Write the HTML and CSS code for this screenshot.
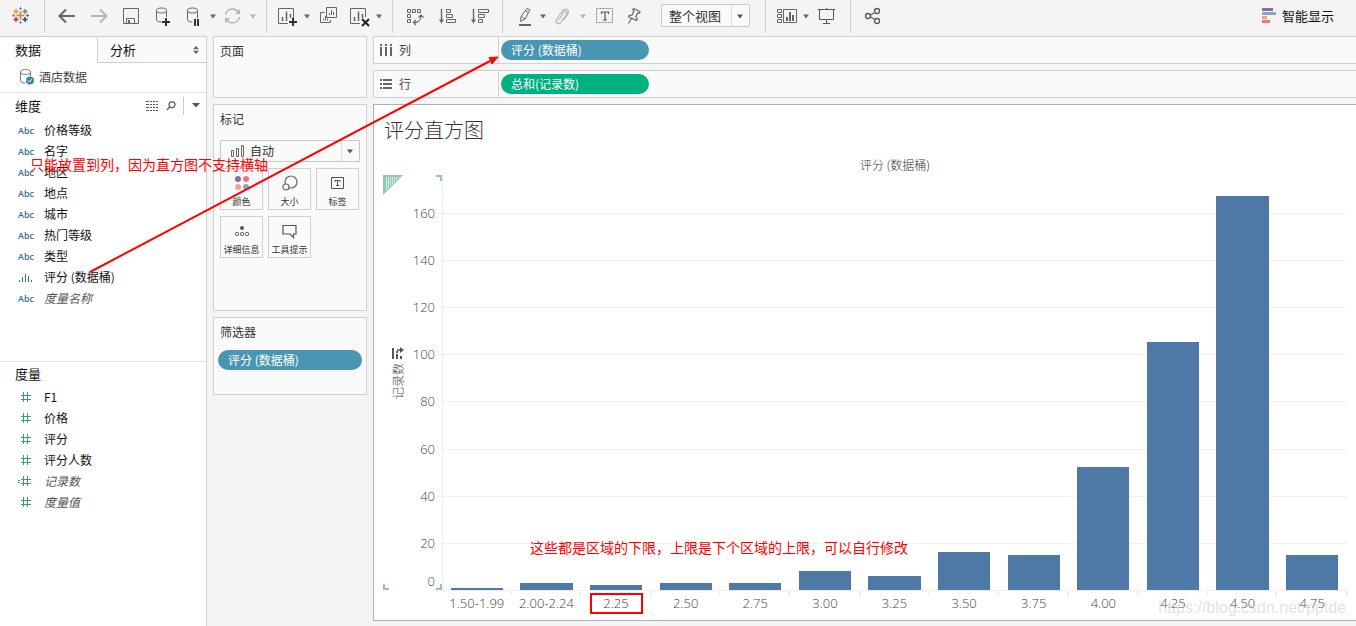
FILE: index.html
```html
<!DOCTYPE html>
<html lang="zh-CN">
<head>
<meta charset="utf-8">
<title>评分直方图</title>
<link rel="stylesheet" href="styles.css">
</head>
<body>
<svg class="defs" aria-hidden="true">
  <symbol id="caret" viewBox="0 0 12 28"><path d="M3 12.500h6l-3 4z" fill="currentColor"/></symbol>
  <symbol id="hash" viewBox="0 0 16 14"><path d="M5.500 2v10M9.500 2v10M3 5.500h10M3 9.500h10" fill="none" stroke="#3a9c7c"/></symbol>
</svg>

<header class="toolbar">
  <div class="group group-logo">
    <svg class="ico" viewBox="0 0 28 28" fill="none" stroke-width="1.400">
      <path d="M14.500 9.500v8M10.500 13.500h8" stroke="#e8762c" stroke-width="1.600"/>
      <path d="M10 7v5M7.500 9.500h5" stroke="#eb912c"/><path d="M19 7v5M16.500 9.500h5" stroke="#59879b"/>
      <path d="M10 15v5M7.500 17.500h5" stroke="#c72037"/><path d="M19 15v5M16.500 17.500h5" stroke="#1f457e"/>
      <path d="M14.500 5v3M13 6.500h3" stroke="#7199a6" stroke-width="1"/><path d="M14.500 19v3M13 20.500h3" stroke="#7099c9" stroke-width="1"/>
      <path d="M7.500 12v3M6 13.500h3" stroke="#e8762c" stroke-width="1"/><path d="M21.500 12v3M20 13.500h3" stroke="#5b6591" stroke-width="1"/>
    </svg>
  </div>
  <div class="group group-pad">
    <button class="tool" aria-label="后退"><svg class="ico" viewBox="0 0 28 28"><path d="M22 14H7M13 7.500L6.500 14l6.500 6.500" fill="none" stroke="#666" stroke-width="2"/></svg></button>
    <button class="tool faded" aria-label="前进"><svg class="ico" viewBox="0 0 28 28"><path d="M6 14h15M15 7.500l6.500 6.500-6.500 6.500" fill="none" stroke="currentColor" stroke-width="2"/></svg></button>
    <button class="tool" aria-label="保存"><svg class="ico" viewBox="0 0 28 28" fill="none" stroke="#666"><path d="M6.500 6.500h15v15h-15zM9.500 21v-4.500h8V21"/><path d="M11 18h2v3h-2z" fill="#666" stroke="none"/></svg></button>
    <button class="tool" aria-label="新建数据源"><svg class="ico" viewBox="0 0 28 28" fill="none" stroke="#666"><ellipse cx="12.500" cy="8.500" rx="5" ry="2.500"/><path d="M7.500 8.500v9c0 2 3 2.500 5 2.500M17.500 8.500V15"/><path d="M17 16v8M13 20h8" stroke="#333" stroke-width="2"/></svg></button>
    <button class="tool narrow" aria-label="暂停自动更新"><svg class="ico" viewBox="0 0 28 28" fill="none" stroke="#666"><ellipse cx="13.500" cy="8.500" rx="5" ry="2.500"/><path d="M8.500 8.500v9c0 2 3 2.500 5 2.500M18.500 8.500V16"/><path d="M16 17v7M19 17v7" stroke="#333" stroke-width="2"/></svg></button>
    <button class="drop" aria-label="更多更新选项"><svg class="car"><use href="#caret"/></svg></button>
    <button class="tool narrow faded" aria-label="刷新"><svg class="ico" viewBox="0 0 28 28" fill="none" stroke="currentColor" stroke-width="1.400"><path d="M6.500 12.500a7 7 0 0 1 12.500-2.500M20.500 15a7 7 0 0 1-12.500 3"/><path d="M21 7v5h-5zM6 21v-5h5z" fill="currentColor" stroke="none"/></svg></button>
    <button class="drop faded" aria-label="刷新选项"><svg class="car"><use href="#caret"/></svg></button>
  </div>
  <div class="group group-pad">
    <button class="tool narrow" aria-label="新建工作表"><svg class="ico" viewBox="0 0 28 28" fill="none" stroke="#666"><path d="M15 21.500H5.500v-15h15V16"/><path d="M9.500 19v-4M13.500 19V9.500M17.500 16v-4" stroke-width="1.500"/><path d="M20 16v8M16 20h8" stroke="#333" stroke-width="2"/></svg></button>
    <button class="drop" aria-label="新建选项"><svg class="car"><use href="#caret"/></svg></button>
    <button class="tool" aria-label="复制工作表"><svg class="ico" viewBox="0 0 28 28" fill="none" stroke="#666"><path d="M11.500 5.500h10v10h-10zM9.500 10.500h-4v10h10V18"/><path d="M14.500 13v-2M16.500 13V8M18.500 13v-3M8.500 18.500v-2M10.500 18.500V14M12.500 18.500v-2"/></svg></button>
    <button class="tool narrow" aria-label="清除工作表"><svg class="ico" viewBox="0 0 28 28" fill="none" stroke="#666"><path d="M15 21.500H5.500v-15h15V15"/><path d="M9.500 19v-4M13.500 19V9.500M17.500 16v-4" stroke-width="1.500"/><path d="M17 17l7 7M24 17l-7 7" stroke="#222" stroke-width="2"/></svg></button>
    <button class="drop" aria-label="清除选项"><svg class="car"><use href="#caret"/></svg></button>
  </div>
  <div class="group group-pad">
    <button class="tool" aria-label="交换行和列"><svg class="ico" viewBox="0 0 28 28" fill="none" stroke="#666"><path d="M6.500 7.500h3v3h-3zM11.500 7.500h3v3h-3zM16.500 7.500h3v3h-3zM6.500 12.500h3v3h-3zM6.500 17.500h3v3h-3z"/><path d="M20 14c0 4-3 6.500-7 6.500M17.500 15.500l2.500-2.500 2.500 2.500M15 18l-2.500 2.500L15 23" stroke-width="1.200"/></svg></button>
    <button class="tool" aria-label="升序排序"><svg class="ico" viewBox="0 0 28 28" fill="none" stroke="#666"><path d="M8.500 7v13" stroke-width="1.400"/><path d="M6 17.500h5l-2.500 4z" fill="#666" stroke="none"/><path d="M13.500 7.500h4v3h-4zM13.500 12.500h6v3h-6zM13.500 17.500h9v3h-9z"/></svg></button>
    <button class="tool" aria-label="降序排序"><svg class="ico" viewBox="0 0 28 28" fill="none" stroke="#666"><path d="M8.500 7v13" stroke-width="1.400"/><path d="M6 17.500h5l-2.500 4z" fill="#666" stroke="none"/><path d="M13.500 7.500h10v3h-10zM13.500 12.500h6v3h-6zM13.500 17.500h4v3h-4z"/></svg></button>
  </div>
  <div class="group group-pad">
    <button class="tool narrow" aria-label="突出显示"><svg class="ico" viewBox="0 0 28 28" fill="none" stroke="#666"><path d="M18 6.500l3 1.500-5 9-4.500 2.500.5-5zM12.500 14.500l3.500 2.500M16.500 9l3 1.500"/><path d="M10 23h12" stroke-width="2"/></svg></button>
    <button class="drop" aria-label="突出显示选项"><svg class="car"><use href="#caret"/></svg></button>
    <button class="tool narrow faded" aria-label="组成员"><svg class="ico" viewBox="0 0 28 28" fill="none" stroke="currentColor" stroke-width="1.200"><path d="M10 18l5-8c1.200-2 4 0 2.800 2l-5.500 8c-2.500 3.500-6.500 1-4.500-2.500l5.500-8.500c3-4 8-1 5.500 3l-4 6"/></svg></button>
    <button class="drop faded" aria-label="组选项"><svg class="car"><use href="#caret"/></svg></button>
    <button class="tool" aria-label="显示标记标签"><svg class="ico" viewBox="0 0 28 28" fill="none" stroke="#888"><path d="M5.500 6.500h16v14h-16z" stroke-dasharray="2 1"/><path d="M10.500 12v-2h7v2M14 10v8M12 18h4" stroke="#555" stroke-width="1.200"/></svg></button>
    <button class="tool narrow" aria-label="固定轴"><svg class="ico" viewBox="0 0 28 28" fill="none" stroke="#666" stroke-width="1.200"><path d="M12.500 6.500l6.500 3-.7 1.500-1.500-.2-2 4 1.500 2.500-.8 1.200-8-3.700.8-1.400 2.700-.3 2-4-1.200-1.200zM10.500 16.500l-3 5"/></svg></button>
    <div class="picker picker-fit"><select aria-label="视图大小"><option>整个视图</option></select><svg class="car"><use href="#caret"/></svg></div>
  </div>
  <div class="group group-pad">
    <button class="tool narrow" aria-label="显示/隐藏卡"><svg class="ico" viewBox="0 0 28 28" fill="none" stroke="#666"><path d="M5.500 7.500h4v3h-4zM5.500 12.500h4v3h-4zM5.500 17.500h4v3h-4zM11.500 7.500h13v13h-13z"/><path d="M15 19v-4M18 19v-9M21 19v-6" stroke-width="2"/></svg></button>
    <button class="drop drop-tight" aria-label="卡选项"><svg class="car"><use href="#caret"/></svg></button>
    <button class="tool" aria-label="演示模式"><svg class="ico" viewBox="0 0 28 28" fill="none" stroke="#555"><path d="M5 7.500h17M6.500 8v9.500h14V8M13.500 6v1M13.500 18v3.500M10 21.500h7"/></svg></button>
  </div>
  <div class="group-last">
    <button class="tool" aria-label="共享"><svg class="ico" viewBox="0 0 28 28" fill="none" stroke="#555" stroke-width="1.300"><circle cx="9" cy="14" r="2.500"/><circle cx="18" cy="9" r="2.500"/><circle cx="18" cy="19" r="2.500"/><path d="M11.500 13l4.500-2.500M11.500 15l4.500 2.500"/></svg></button>
  </div>
  <button class="smart"><svg class="smart-ico" viewBox="0 0 14 16"><path d="M0 0h11v3H0z" fill="#876f9c"/><path d="M0 4h14v3H0z" fill="#84a6cd"/><path d="M0 8h5v3H0z" fill="#f4a582"/><path d="M0 12h8v3H0z" fill="#f6717f"/></svg>智能显示</button>
</header>

<div class="workspace">
  <aside class="sidebar">
    <div class="tabs">
      <button class="tab tab-active">数据</button>
      <button class="tab tab-other">分析<svg class="updown" viewBox="0 0 6 8"><path d="M0 3.200h6L3 0zM0 4.800h6L3 8z" fill="#5c6a75"/></svg></button>
    </div>
    <div class="source">
      <svg class="source-ico" viewBox="0 0 15 16" fill="none" stroke="#777"><ellipse cx="5.500" cy="3" rx="5" ry="2.400"/><path d="M.5 3v8.500c0 1.500 2 2.500 5 2.500M10.500 3v4"/><circle cx="10" cy="11.500" r="4" fill="#3a87ad" stroke="none"/><path d="M8 11.500l1.500 1.500 2.500-3" stroke="#fff"/></svg>
      酒店数据
    </div>
    <section class="dims">
      <div class="side-head side-head-dims"><h2>维度</h2>
        <svg class="list-ico" viewBox="0 0 12 10" stroke="#555"><path d="M0 .5h12M0 3.500h12M0 6.500h12M0 9.500h12" stroke-dasharray="3 1 2 1 2 1 3"/></svg>
        <svg class="find-ico" viewBox="0 0 10 10" fill="none" stroke="#555" stroke-width="1.200"><circle cx="6" cy="3.800" r="3"/><path d="M3.800 6L.8 9"/></svg>
        <button class="side-menu" aria-label="维度菜单"><svg viewBox="0 0 8 5"><path d="M0 0h8L4 4.500z" fill="#555"/></svg></button>
      </div>
      <ul class="fields">
        <li><span class="abc">Abc</span>价格等级</li>
        <li><span class="abc">Abc</span>名字</li>
        <li><span class="abc">Abc</span>地区</li>
        <li><span class="abc">Abc</span>地点</li>
        <li><span class="abc">Abc</span>城市</li>
        <li><span class="abc">Abc</span>热门等级</li>
        <li><span class="abc">Abc</span>类型</li>
        <li><svg class="type" viewBox="0 0 16 14"><path d="M1.500 10v2M4.500 7v5M7.500 4v8M10.500 6v6M13.500 10v2" stroke="#31708f" fill="none"/></svg>评分 (数据桶)</li>
        <li class="generated"><span class="abc">Abc</span><em>度量名称</em></li>
      </ul>
    </section>
    <section class="measures">
      <div class="side-head"><h2>度量</h2></div>
      <ul class="fields">
        <li><svg class="type"><use href="#hash"/></svg>F1</li>
        <li><svg class="type"><use href="#hash"/></svg>价格</li>
        <li><svg class="type"><use href="#hash"/></svg>评分</li>
        <li><svg class="type"><use href="#hash"/></svg>评分人数</li>
        <li class="generated"><svg class="type"><use href="#hash"/><path d="M0 6.500h2M0 8.500h2" stroke="#3a9c7c"/></svg><em>记录数</em></li>
        <li class="generated"><svg class="type"><use href="#hash"/></svg><em>度量值</em></li>
      </ul>
    </section>
  </aside>

  <div class="cards">
    <section class="card card-pages"><h3>页面</h3></section>
    <section class="card card-marks">
      <h3>标记</h3>
      <div class="picker picker-mark">
        <svg class="bars-ico" viewBox="0 0 14 12" fill="none" stroke="#666"><path d="M.5 5.500h2v6h-2zM5.500 3.500h2v8h-2zM10.500.5h2v11h-2z"/></svg>
        <select aria-label="标记类型"><option>自动</option></select><svg class="car"><use href="#caret"/></svg>
      </div>
      <div class="mark-grid">
        <button class="mark"><svg viewBox="0 0 18 18"><circle cx="5" cy="5" r="3" fill="#876f9c"/><circle cx="13" cy="5" r="3" fill="#f6717f"/><circle cx="5" cy="13" r="3" fill="#f4a582"/><circle cx="13" cy="13" r="3" fill="#84a6cd"/></svg>颜色</button>
        <button class="mark"><svg viewBox="0 0 18 18" fill="none" stroke="#666" stroke-width="1.200"><circle cx="10" cy="8" r="6"/><circle cx="5" cy="13" r="3" fill="#fafafa"/></svg>大小</button>
        <button class="mark"><svg viewBox="0 0 18 18" fill="none" stroke="#555"><path d="M2.500 3.500h12v11h-12zM6 8V6.500h5V8M8.500 6.500v5M7 11.500h3"/></svg>标签</button>
        <button class="mark"><svg viewBox="0 0 18 18" fill="none" stroke="#666"><circle cx="9" cy="6" r="2" fill="#555" stroke="none"/><circle cx="4" cy="12" r="1.700"/><circle cx="9" cy="12" r="1.700"/><circle cx="14" cy="12" r="1.700"/></svg>详细信息</button>
        <button class="mark"><svg viewBox="0 0 18 18" fill="none" stroke="#555" stroke-width="1.200"><path d="M2 3.500h13v8.500h-2.500v3.500l-3.500-3.500h-7z"/></svg>工具提示</button>
      </div>
    </section>
    <section class="card card-filters"><h3>筛选器</h3><button class="pill pill-blue">评分 (数据桶)</button></section>
  </div>

  <main class="main">
    <div class="shelf">
      <div class="shelf-name"><svg viewBox="0 0 12 12"><path d="M0 0h2v2H0zM5 0h2v2H5zM10 0h2v2h-2zM0 3h2v9H0zM5 3h2v9H5zM10 3h2v9h-2z" fill="#666"/></svg>列</div>
      <button class="pill pill-blue">评分 (数据桶)</button>
    </div>
    <div class="shelf">
      <div class="shelf-name"><svg viewBox="0 0 12 12"><path d="M0 1h2v2H0zM0 5h2v2H0zM0 9h2v2H0zM3 1h9v2H3zM3 5h9v2H3zM3 9h9v2H3z" fill="#666"/></svg>行</div>
      <button class="pill pill-green">总和(记录数)</button>
    </div>
    <section class="view">
      <h1>评分直方图</h1>
      <div class="chart">
        <div class="col-title">评分 (数据桶)</div>
        <div class="axis">
          <div class="axis-title">
            <svg viewBox="0 0 12 12"><path d="M1 1v11M5 4v2M5 7v5M9 9v3" stroke="#555" stroke-width="2"/><path d="M5 3h4" stroke="#555" stroke-width="1.500"/><path d="M8 0l4 3-4 3z" fill="#555"/></svg>
            <span>记录数</span>
          </div>
          <div class="ticks">
            <span class="tick-zero">0</span><span>20</span><span>40</span><span>60</span><span>80</span><span>100</span><span>120</span><span>140</span><span>160</span>
          </div>
          <svg class="mark-tl" viewBox="0 0 20 20"><path d="M0 0h20L0 20z" fill="#8fc7b1"/><path d="M3.500 2v13M5.500 2v11M7.500 2v9M9.500 2v7M11.500 2v5M13.500 2v3M15.500 2v1" stroke="#d5ebe2"/></svg>
          <i class="corner corner-tr"></i><i class="corner corner-bl"></i><i class="corner corner-br"></i>
        </div>
        <div class="plot">
          <div class="grid"><i></i><i></i><i></i><i></i><i></i><i></i><i></i><i></i></div>
          <div class="bars">
            <b style="height:0.57%"></b><b style="height:1.7%"></b><b style="height:1.14%"></b><b style="height:1.7%"></b><b style="height:1.7%"></b><b style="height:4.55%"></b><b style="height:3.41%"></b><b style="height:9.09%"></b><b style="height:8.52%"></b><b style="height:29.55%"></b><b style="height:59.66%"></b><b style="height:94.89%"></b><b style="height:8.52%"></b>
          </div>
          <p class="note note-bins">这些都是区域的下限，上限是下个区域的上限，可以自行修改</p>
        </div>
        <div class="bins">
          <div><span>1.50-1.99</span></div><div><span>2.00-2.24</span></div><div><span class="boxed">2.25</span></div><div><span>2.50</span></div><div><span>2.75</span></div><div><span>3.00</span></div><div><span>3.25</span></div><div><span>3.50</span></div><div><span>3.75</span></div><div><span>4.00</span></div><div><span>4.25</span></div><div><span>4.50</span></div><div><span>4.75</span></div>
        </div>
      </div>
      <p class="watermark">https://blog.csdn.net/pptde</p>
    </section>
  </main>
</div>

<p class="note note-columns">只能放置到列，因为直方图不支持横轴</p>
<svg class="arrow" viewBox="0 0 410 218" aria-hidden="true"><path d="M0 216L400 5" stroke="#f00" stroke-width="2" fill="none"/><path d="M408 1l-6 7-3-6.500z" fill="#f00" stroke="#f00"/></svg>
</body>
</html>
```

FILE: styles.css
```css
* { box-sizing: border-box; }
body {
  margin: 0;
  min-height: 100vh;
  display: flex;
  flex-direction: column;
  position: relative;
  background: #f4f4f4;
  color: #222;
  font: 12px/20px "Noto Sans CJK SC", sans-serif;
}
button, select { font: inherit; color: inherit; background: none; border: 0; padding: 0; margin: 0; }
h1, h2, h3, p, ul { margin: 0; padding: 0; font-weight: 400; }
svg { display: block; flex: none; }
.defs { position: absolute; width: 0; height: 0; }

.toolbar { display: flex; height: 36px; flex: none; }
.group, .group-last { display: flex; height: 33px; padding-top: 2px; }
.group { border-right: 1px solid #d0d0d0; }
.group-logo { padding-left: 6px; padding-right: 10px; }
.group-pad { padding-left: 6px; padding-right: 7px; }
.group-last { padding-left: 6px; }
.ico { width: 28px; height: 28px; }
.car { width: 12px; height: 28px; }
.tool { width: 32px; height: 28px; display: flex; justify-content: center; }
.narrow { width: 28px; }
.drop { width: 12px; height: 28px; color: #666; }
.drop-tight { width: 11px; }
.faded { color: #b4b4b4; }
.picker { display: flex; align-items: center; position: relative; border: 1px solid #c8c8c8; border-radius: 1px; background: #fafafa; color: #333; }
.picker select { appearance: none; flex: 1; align-self: stretch; min-width: 0; }
.picker .car { position: absolute; right: 3px; top: 50%; margin-top: -14px; color: #555; pointer-events: none; }
.picker::after { content: ""; position: absolute; right: 17px; top: 0; bottom: 0; border-left: 1px solid #ddd; }
.picker-fit { width: 89px; height: 23px; margin: 2px 8px 0 12px; }
.picker-fit select { font-size: 13px; padding-left: 7px; }
.smart { margin: 0 22px 4px auto; display: flex; align-items: center; gap: 6px; font-size: 13px; color: #111; }
.smart-ico { width: 14px; height: 16px; }

.workspace { flex: 1; display: flex; }
.sidebar { width: 207px; flex: none; background: #fff; border: solid #d0d0d0; border-width: 1px 1px 0 0; display: flex; flex-direction: column; }
.tabs { display: flex; height: 26px; font-size: 13px; color: #111; }
.tab { text-align: left; }
.tab-active { width: 97px; padding-left: 15px; }
.tab-other { flex: 1; display: flex; justify-content: space-between; align-items: center; padding: 0 7px 0 12px; background: #fafafa; border: solid #d0d0d0; border-width: 0 0 1px 1px; }
.updown { width: 6px; height: 8px; }
.source { display: flex; align-items: center; gap: 4px; height: 30px; padding: 0 0 2px 20px; border-bottom: 1px solid #e2e2e2; color: #444; }
.source-ico { width: 15px; height: 16px; }
.side-head { display: flex; align-items: center; height: 25px; padding: 0 0 2px 15px; }
.side-head-dims { height: 27px; }
.side-head h2 { font-size: 13px; color: #111; flex: 1; }
.list-ico { width: 12px; height: 10px; margin-right: 8px; }
.find-ico { width: 10px; height: 10px; margin-right: 7px; }
.side-menu { height: 18px; padding: 0 6px 0 8px; border-left: 1px solid #ccc; }
.side-menu svg { width: 8px; height: 5px; }
.dims { height: 269px; border-bottom: 1px solid #e2e2e2; }
.fields { list-style: none; color: #111; }
.fields li { display: flex; align-items: center; height: 21px; padding: 0 0 2px 18px; }
.fields .generated { color: #555; }
.abc { width: 26px; padding-top: 2px; font: 10px/18px "Open Sans", sans-serif; font-weight: 600; font-size: 9px; color: #31708f; }
.type { width: 16px; height: 14px; margin-right: 10px; }

.cards { width: 154px; flex: none; margin: 0 6px; display: flex; flex-direction: column; gap: 6px; }
.card { border: 1px solid #d0d0d0; background: #fafafa; padding: 0 6px; color: #333; }
.card h3 { font-size: 12px; line-height: 28px; }
.card-pages { height: 62px; }
.card-marks { height: 207px; }
.card-filters { height: 78px; padding: 0 4px; }
.card-filters h3 { padding-left: 2px; }
.card-filters .pill { width: 100%; margin-top: 4px; }
.picker-mark { height: 22px; margin: 7px 0 6px; }
.bars-ico { width: 14px; height: 12px; margin: 0 5px 0 10px; }
.mark-grid { display: grid; grid-template-columns: repeat(3, 43px); gap: 6px 5px; }
.mark { height: 42px; border: 1px solid #d0d0d0; background: #fafafa; display: flex; flex-direction: column; align-items: center; padding-top: 5px; font-size: 9px; line-height: 20px; white-space: nowrap; }
.mark svg { width: 18px; height: 18px; }

.pill { display: block; width: 148px; height: 20px; border-radius: 10px; padding: 0 10px; line-height: 18px; text-align: left; color: #fff; }
.pill-blue { background: #4996b2; }
.pill-green { background: #00b180; }

.main { flex: 1; min-width: 0; display: flex; flex-direction: column; gap: 6px; padding-bottom: 5px; }
.shelf { height: 28px; display: flex; align-items: center; border: solid #d0d0d0; border-width: 1px 0 1px 1px; background: #fafafa; }
.shelf-name { display: flex; align-items: center; gap: 7px; width: 125px; height: 26px; padding-left: 6px; border-right: 1px solid #d0d0d0; margin-right: 2px; color: #444; }
.shelf-name svg { width: 12px; height: 12px; }

.view { flex: 1; position: relative; display: flex; flex-direction: column; padding: 0 8px 0 9px; background: #fff; border: solid #b0b0b0; border-width: 1px 0 1px 1px; }
.view h1 { font-size: 20px; font-weight: 300; line-height: 50px; padding-left: 1px; color: #333; }
.chart { flex: 1; display: grid; grid-template: 20px 1fr 30px / 59px 1fr; }
.col-title { grid-area: 1 / 2; text-align: center; color: #333; font-weight: 300; }
.axis { grid-area: 2 / 1; position: relative; display: flex; justify-content: space-between; color: #444; }
.axis-title { display: flex; flex-direction: column; align-items: center; justify-content: center; gap: 4px; width: 30px; padding-bottom: 18px; font-weight: 300; line-height: 16px; }
.axis-title svg { width: 12px; height: 12px; }
.axis-title span { writing-mode: vertical-rl; text-orientation: sideways; transform: rotate(180deg); }
.ticks { display: flex; flex-direction: column-reverse; padding-right: 7px; font: 13px/18px "Open Sans", sans-serif; font-weight: 300; text-align: right; }
.ticks span { height: 11.36%; display: flex; align-items: center; justify-content: flex-end; }
.ticks .tick-zero { height: 5.68%; align-items: flex-end; }
.mark-tl { position: absolute; left: 0; top: 0; width: 20px; height: 20px; }
.corner { position: absolute; width: 6px; height: 6px; border: 0 solid #8fc7b1; }
.corner-tr { right: 0; top: 0; border-width: 2px 2px 0 0; }
.corner-bl { left: 0; bottom: 0; border-width: 0 0 2px 2px; }
.corner-br { right: 0; bottom: 0; border-width: 0 2px 2px 0; }
.plot { grid-area: 2 / 2; position: relative; display: grid; border-left: 1px solid #efefef; }
.grid { grid-area: 1 / 1; display: flex; flex-direction: column-reverse; margin-left: -5px; }
.grid i { height: 11.36%; border-top: 1px solid #f0f0f0; }
.bars { grid-area: 1 / 1; position: relative; margin: 0 1px 0 -1px; display: grid; grid-template-columns: repeat(13, 1fr); align-items: end; justify-items: center; }
.bars b { width: 75%; background: #4e79a7; }
.bins { grid-area: 3 / 2; margin-right: 1px; display: grid; grid-template-columns: repeat(13, 1fr); border-top: 1px solid #efefef; color: #444; font: 13px/16px "Open Sans", sans-serif; font-weight: 300; text-align: center; }
.bins div { padding-top: 2px; background: linear-gradient(#e8e8e8, #e8e8e8) right top / 1px 4px no-repeat; display: flex; justify-content: center; align-items: flex-start; }
.bins span { min-width: 53px; height: 21px; border: 2px solid transparent; }
.bins .boxed { border-color: #f00; }

.note { position: absolute; color: #f00; font-size: 14px; line-height: 20px; white-space: nowrap; }
.note-bins { left: 87px; bottom: 33px; }
.note-columns { left: 30px; top: 154px; }
.arrow { position: absolute; left: 90px; top: 56px; width: 410px; height: 218px; pointer-events: none; }
.watermark { position: absolute; right: 10px; bottom: 2px; font: 16px/20px "Liberation Sans", Arial, sans-serif; color: rgba(190, 190, 190, 0.45); }
```
